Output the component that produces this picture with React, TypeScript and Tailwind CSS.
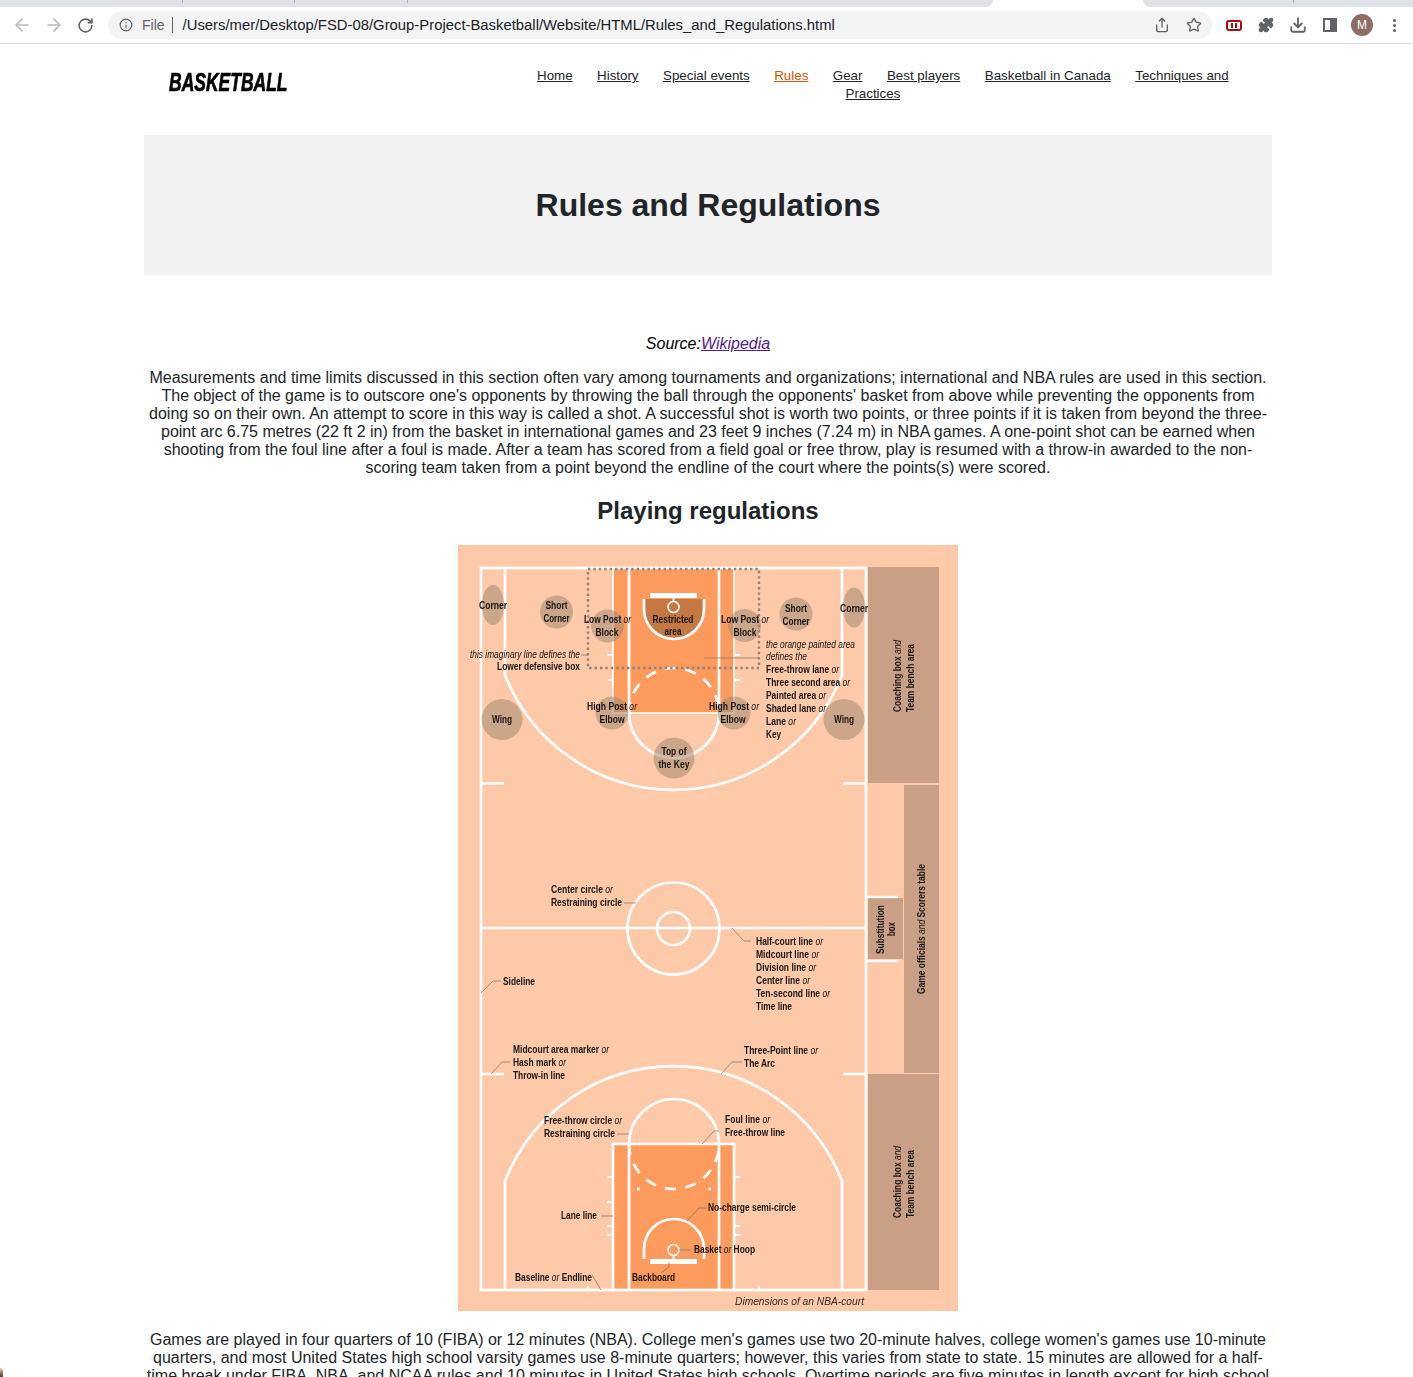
import React from 'react';
import { ArrowLeft, ArrowRight, RotateCw, Info, Share, Star, Puzzle, Download } from 'lucide-react';

const SANS = '"Liberation Sans", Arial, sans-serif';
const WHITE = '#ffffff';
const ORANGE = '#fd9b5e';
const MARK = '#c9a085';

// label in the court picture; w squeezes the whole line into the narrow width of the original
const Lab = ({ x, y, w, c, i, rot, or, after, children, size = 10.4, fill = '#151515' }: {
  x: number; y: number; w: number; c?: boolean; i?: boolean; rot?: boolean; or?: boolean; after?: string; children: React.ReactNode; size?: number; fill?: string;
}) => (
  <text
    x={rot ? 0 : x}
    y={rot ? 0 : y}
    transform={rot ? `translate(${x} ${y}) rotate(-90)` : undefined}
    textLength={w}
    lengthAdjust="spacingAndGlyphs"
    textAnchor={c ? 'middle' : 'start'}
    fontSize={size}
    fontWeight={i ? 400 : 700}
    fontStyle={i ? 'italic' : 'normal'}
    fill={fill}
    fontFamily={SANS}
  >
    {children}
    {or && <tspan fontStyle="italic" fontWeight={400}> or</tspan>}
    {after && <tspan> {after}</tspan>}
  </text>
);

const Court = () => (
  <svg viewBox="0 0 500 766" width={500} height={766} className="block bg-[#fec9a8] blur-[0.4px]">
    {/* side panels */}
    <rect x="410" y="22" width="71" height="216" fill={MARK} />
    <rect x="446" y="240" width="35" height="288" fill={MARK} />
    <rect x="410" y="529" width="71" height="216" fill={MARK} />
    <rect x="410" y="353" width="35" height="61" fill={MARK} />

    {/* painted areas */}
    <rect x="155" y="23" width="121" height="145" fill={ORANGE} />
    <rect x="155" y="599" width="121" height="146" fill={ORANGE} />
    <path d="M186 54 V64 A30 30 0 0 0 246 64 V54 Z" fill="#c67843" />

    <g fill="none" stroke={WHITE} strokeWidth="2.7">
      {/* outline */}
      <rect x="23" y="23" width="385" height="722" />
      <path d="M23 383 H408" />
      <circle cx="215.5" cy="383.5" r="46" />
      <circle cx="215.5" cy="383.5" r="16.5" />
      <path d="M23 238.5 H46 M385 238.5 H408 M23 529 H46 M385 529 H408" />
      <path d="M408 352 H440 M408 416 H440" />

      {/* top half */}
      <path d="M47 23 V130 A181 181 0 0 0 384 130 V23" />
      <path d="M155 23 V168 H276 V23" strokeWidth="1.6" />
      <path d="M171 23 V168 A45 45 0 0 0 261 168 V23" />
      <path d="M171 168 A45 45 0 0 1 261 168" strokeDasharray="11 9.5" />
      <path d="M186 54 V64 A30 30 0 0 0 246 64 V54" />
      <circle cx="215.5" cy="62" r="5.5" strokeWidth="1.6" />
      <path d="M215.5 53 V57" strokeWidth="1.8" />
      <path d="M149 110 H155 M149 135 H155 M276 110 H282 M276 135 H282" strokeWidth="1.8" />

      {/* bottom half */}
      <path d="M47 745 V636 A181 181 0 0 1 384 636 V745" />
      <path d="M155 745 V599 H276 V745" />
      <path d="M171 745 V599 A45 45 0 0 1 261 599 V745" />
      <path d="M171 599 A45 45 0 0 0 261 599" strokeDasharray="11 9.5" />
      <path d="M179 644 H182 M250 644 H253" />
      <path d="M186 714 V704 A30 30 0 0 1 246 704 V714" />
      <circle cx="215.5" cy="705" r="5.5" strokeWidth="1.6" />
      <path d="M215.5 711 V715" strokeWidth="1.8" />
      <path d="M149 632 H155 M149 657 H155 M149 681 H155 M149 690 H155 M276 632 H282 M276 681 H282 M276 690 H282" strokeWidth="1.8" />
      <path d="M130 745 V741 M301 745 V741" strokeWidth="1.8" />
    </g>
    <rect x="192" y="48" width="47" height="5" fill={WHITE} />
    <rect x="192" y="714" width="47" height="5" fill={WHITE} />

    {/* lower defensive box */}
    <rect x="130" y="24" width="171" height="99" fill="none" stroke="#8f8277" strokeWidth="2.4" strokeDasharray="2.4 3" />

    {/* position markers */}
    <g fill="#a3886f" fillOpacity="0.55">
      <ellipse cx="35" cy="60" rx="11" ry="20" />
      <ellipse cx="396" cy="62.5" rx="11" ry="20" />
      <circle cx="98.5" cy="67" r="16.5" />
      <circle cx="338" cy="69" r="16.5" />
      <circle cx="149.5" cy="81" r="16.5" />
      <circle cx="286.5" cy="80.5" r="16.5" />
      <circle cx="154" cy="168" r="16.5" />
      <circle cx="276" cy="168" r="16.5" />
      <circle cx="44" cy="174.5" r="20.5" />
      <circle cx="386" cy="174.5" r="20.5" />
      <circle cx="216" cy="213" r="20.5" />
    </g>

    {/* leader lines */}
    <g fill="none" stroke="#7b6f66" strokeWidth="0.7">
      <path d="M123 110 H130" />
      <path d="M246 113 H301" />
      <path d="M166 358 H178" />
      <path d="M274 383 L286 396 H293" />
      <path d="M23 448 L35 436 H43" />
      <path d="M33 529 L44 517 H52" />
      <path d="M263 529 L274 517 H284" />
      <path d="M159 589 H171" />
      <path d="M244 599 L256 586 H261" />
      <path d="M143 671 H155" />
      <path d="M229 676 L241 663 H249" />
      <path d="M221 705 H233" />
      <path d="M211 717 L211 722 L203 728" />
      <path d="M134 730 L143 745" />
    </g>

    {/* labels, top half */}
    <Lab x={35} y={64} w={28} c>Corner</Lab>
    <Lab x={396} y={67} w={28} c>Corner</Lab>
    <Lab x={98.5} y={64} w={22} c>Short</Lab>
    <Lab x={98.5} y={77} w={26} c>Corner</Lab>
    <Lab x={338} y={67} w={22} c>Short</Lab>
    <Lab x={338} y={80} w={27} c>Corner</Lab>
    <Lab x={126} y={78} w={47} or>Low Post</Lab>
    <Lab x={149} y={91} w={23} c>Block</Lab>
    <Lab x={263} y={78} w={48} or>Low Post</Lab>
    <Lab x={287} y={91} w={23} c>Block</Lab>
    <Lab x={215} y={78} w={41} c>Restricted</Lab>
    <Lab x={215} y={90} w={17} c>area</Lab>
    <Lab x={12} y={113} w={110} i>this imaginary line defines the</Lab>
    <Lab x={39} y={125} w={83}>Lower defensive box</Lab>
    <Lab x={129} y={165} w={50} or>High Post</Lab>
    <Lab x={154} y={178} w={25} c>Elbow</Lab>
    <Lab x={251} y={165} w={50} or>High Post</Lab>
    <Lab x={275} y={178} w={25} c>Elbow</Lab>
    <Lab x={44} y={178} w={20} c>Wing</Lab>
    <Lab x={386} y={178} w={20} c>Wing</Lab>
    <Lab x={216} y={210} w={25} c>Top of</Lab>
    <Lab x={216} y={223} w={31} c>the Key</Lab>
    <Lab x={308} y={103} w={89} i>the orange painted area</Lab>
    <Lab x={308} y={115} w={41} i>defines the</Lab>
    <Lab x={308} y={128} w={73} or>Free-throw lane</Lab>
    <Lab x={308} y={141} w={84} or>Three second area</Lab>
    <Lab x={308} y={154} w={60} or>Painted area</Lab>
    <Lab x={308} y={167} w={60} or>Shaded lane</Lab>
    <Lab x={308} y={180} w={30} or>Lane</Lab>
    <Lab x={308} y={193} w={15}>Key</Lab>

    {/* labels, middle */}
    <Lab x={93} y={348} w={62} or>Center circle</Lab>
    <Lab x={93} y={361} w={71}>Restraining circle</Lab>
    <Lab x={298} y={400} w={67} or>Half-court line</Lab>
    <Lab x={298} y={413} w={63} or>Midcourt line</Lab>
    <Lab x={298} y={426} w={60} or>Division line</Lab>
    <Lab x={298} y={439} w={54} or>Center line</Lab>
    <Lab x={298} y={452} w={74} or>Ten-second line</Lab>
    <Lab x={298} y={465} w={36}>Time line</Lab>
    <Lab x={45} y={440} w={32}>Sideline</Lab>

    <Lab x={55} y={508} w={96} or>Midcourt area marker</Lab>
    <Lab x={55} y={521} w={53} or>Hash mark</Lab>
    <Lab x={55} y={534} w={52}>Throw-in line</Lab>
    <Lab x={286} y={509} w={74} or>Three-Point line</Lab>
    <Lab x={286} y={522} w={31}>The Arc</Lab>

    {/* labels, bottom half */}
    <Lab x={86} y={579} w={78} or>Free-throw circle</Lab>
    <Lab x={86} y={592} w={71}>Restraining circle</Lab>
    <Lab x={267} y={578} w={45} or>Foul line</Lab>
    <Lab x={267} y={591} w={60}>Free-throw line</Lab>
    <Lab x={103} y={674} w={36}>Lane line</Lab>
    <Lab x={250} y={666} w={88}>No-charge semi-circle</Lab>
    <Lab x={236} y={708} w={61} or after="Hoop">Basket</Lab>
    <Lab x={57} y={736} w={77} or after="Endline">Baseline</Lab>
    <Lab x={174} y={736} w={43}>Backboard</Lab>
    <Lab x={277} y={760} w={129} i size={10.5} fill="#2a2a2a">Dimensions of an NBA-court</Lab>

    {/* rotated panel labels */}
    <Lab x={443} y={167} w={72} rot>Coaching box <tspan fontStyle="italic" fontWeight={400}>and</tspan></Lab>
    <Lab x={456} y={167} w={68} rot>Team bench area</Lab>
    <Lab x={467} y={449} w={130} rot>Game officials <tspan fontStyle="italic" fontWeight={400}>and</tspan> Scorers table</Lab>
    <Lab x={426} y={409} w={49} rot>Substitution</Lab>
    <Lab x={437} y={391} w={14} rot>box</Lab>
    <Lab x={443} y={673} w={72} rot>Coaching box <tspan fontStyle="italic" fontWeight={400}>and</tspan></Lab>
    <Lab x={456} y={673} w={68} rot>Team bench area</Lab>
  </svg>
);

const NAV_TOP = ['Home', 'History', 'Special events', 'Rules', 'Gear', 'Best players', 'Basketball in Canada', 'Techniques and'];

const Toolbar = () => (
  <div className="flex flex-col shrink-0">
    <div className="flex h-[7px] bg-white">
      <div className="flex w-[993px] rounded-br-lg bg-[#dee1e6]">
        <span className="ml-[182px] h-[3px] w-px bg-[#a8abb0]" />
        <span className="ml-[111px] h-[3px] w-px bg-[#a8abb0]" />
        <span className="ml-[112px] h-[3px] w-px bg-[#a8abb0]" />
      </div>
      <div className="w-[150px]" />
      <div className="flex-1 rounded-bl-lg bg-[#dee1e6]">
        <span className="ml-[150px] block h-[3px] w-px bg-[#a8abb0]" />
      </div>
    </div>
    <div className="flex h-[37px] items-center border-b border-[#dadce0] bg-white text-[#5f6368]">
      <div className="flex w-[108px] items-center pl-[12px] gap-[12px]">
        <ArrowLeft size={20} className="text-[#b9bbbe]" strokeWidth={2} />
        <ArrowRight size={20} className="text-[#b9bbbe]" strokeWidth={2} />
        <RotateCw size={17} strokeWidth={2.3} className="text-[#5f6368] ml-[1px]" />
      </div>
      <div className="flex h-[28px] w-[1104px] items-center rounded-full bg-[#f1f3f4] pl-[11px] text-[14px]">
        <Info size={14} />
        <span className="ml-[9px] text-[#5f6368]">File</span>
        <span className="ml-[7px] h-[16px] w-px bg-[#5f6368]" />
        <span className="ml-[10px] text-[14.85px] text-[#202124]">/Users/mer/Desktop/FSD-08/Group-Project-Basketball/Website/HTML/Rules_and_Regulations.html</span>
        <div className="ml-auto flex items-center gap-[16px] pr-[10px]">
          <Share size={16} />
          <Star size={16} strokeWidth={2} />
        </div>
      </div>
      <div className="flex flex-1 items-center pl-[6px]">
        <div className="flex w-[32px] justify-center">
          <span className="flex h-[11px] w-[16px] items-center justify-center gap-[2px] rounded-[3px] border-2 border-[#a50e0e]">
            <span className="h-[5px] w-[2px] bg-[#a50e0e]" />
            <span className="h-[5px] w-[2px] bg-[#a50e0e]" />
          </span>
        </div>
        <div className="flex w-[32px] justify-center"><Puzzle size={16} fill="#5f6368" /></div>
        <div className="flex w-[32px] justify-center"><Download size={18} strokeWidth={2.4} /></div>
        <div className="flex w-[32px] justify-center">
          <span className="flex h-[14px] w-[14px] justify-end border-2 border-[#5f6368]">
            <span className="h-full w-[5px] bg-[#5f6368]" />
          </span>
        </div>
        <div className="flex w-[32px] justify-center">
          <span className="flex h-[22px] w-[22px] items-center justify-center rounded-full bg-[#8d6e63] text-[12px] text-white">M</span>
        </div>
        <div className="flex w-[32px] justify-center">
          <span className="flex flex-col gap-[2px]">
            <span className="h-[3px] w-[3px] rounded-full bg-[#5f6368]" />
            <span className="h-[3px] w-[3px] rounded-full bg-[#5f6368]" />
            <span className="h-[3px] w-[3px] rounded-full bg-[#5f6368]" />
          </span>
        </div>
      </div>
    </div>
  </div>
);

const Header = () => (
  <header className="flex h-[91px] shrink-0 items-start pl-[169px]">
    <div className="mt-[22px] w-[368px]">
      <span className="inline-block origin-left scale-x-[0.66] text-[26.5px] leading-[32px] font-bold italic text-black [-webkit-text-stroke:0.7px_black]">BASKETBALL</span>
    </div>
    <nav className="mt-[23px] text-[13.33px] leading-[18px] text-[#212529]">
      <div className="flex gap-[24.5px]">
        {NAV_TOP.map((n) => (
          <a key={n} href="#" className={n === 'Rules' ? 'underline text-[#d35400]' : 'underline'}>{n}</a>
        ))}
      </div>
      <div className="pl-[308.5px]"><a href="#" className="underline">Practices</a></div>
    </nav>
  </header>
);

export default function App() {
  return (
    <div className="relative flex h-screen flex-col overflow-hidden bg-white text-[#212529]" style={{ fontFamily: SANS }}>
      <Toolbar />
      <Header />
      <main className="ml-[144px] w-[1128px] shrink-0 text-center">
        <div className="flex h-[140px] items-center justify-center bg-[#f2f2f2]">
          <h1 className="text-[32px] leading-[38px] font-bold">Rules and Regulations</h1>
        </div>
        <p className="mt-[60px] text-[16px] leading-[18px] italic text-black">
          Source:<a href="#" className="text-[#551a8b] underline">Wikipedia</a>
        </p>
        <p className="mt-[16px] text-[16px] leading-[18px]">
          Measurements and time limits discussed in this section often vary among tournaments and organizations; international and NBA rules are used in this section. The object of the game is to outscore one's opponents by throwing the ball through the opponents' basket from above while preventing the opponents from doing so on their own. An attempt to score in this way is called a shot. A successful shot is worth two points, or three points if it is taken from beyond the three-point arc 6.75 metres (22 ft 2 in) from the basket in international games and 23 feet 9 inches (7.24 m) in NBA games. A one-point shot can be earned when shooting from the foul line after a foul is made. After a team has scored from a field goal or free throw, play is resumed with a throw-in awarded to the non-scoring team taken from a point beyond the endline of the court where the points(s) were scored.
        </p>
        <h2 className="mt-[19px] text-[24px] leading-[29px] font-bold">Playing regulations</h2>
        <div className="mt-[20px] flex justify-center"><Court /></div>
        <p className="mt-[20px] text-[16px] leading-[18px]">
          Games are played in four quarters of 10 (FIBA) or 12 minutes (NBA). College men's games use two 20-minute halves, college women's games use 10-minute quarters, and most United States high school varsity games use 8-minute quarters; however, this varies from state to state. 15 minutes are allowed for a half-time break under FIBA, NBA, and NCAA rules and 10 minutes in United States high schools. Overtime periods are five minutes in length except for high school which is four minutes in length.
        </p>
      </main>
      {/* bit of the desktop showing at the window corner */}
      <div className="absolute bottom-0 left-0 h-[9px] w-[3px] rounded-tr-full bg-gradient-to-b from-[#e8d8c8] to-[#5a3a20]" />
    </div>
  );
}
